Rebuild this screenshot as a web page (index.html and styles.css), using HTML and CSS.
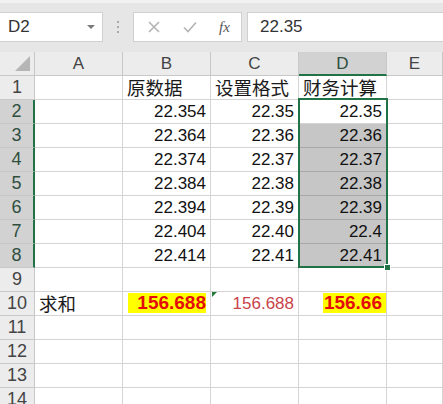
FILE: index.html
```html
<!DOCTYPE html>
<html>
<head>
<meta charset="utf-8">
<link rel="stylesheet" href="styles.css">
</head>
<body>
<div class="app">
  <div class="toolbar">
    <div class="namebox"><span class="ref">D2</span><span class="caret"></span></div>
    <div class="grip"><i></i><i></i><i></i></div>
    <div class="fxbox">
      <svg class="ico" width="16" height="16" viewBox="0 0 16 16"><path d="M3 3 L13 13 M13 3 L3 13" stroke="#b4b4b4" stroke-width="1.6" fill="none"/></svg>
      <svg class="ico" width="16" height="16" viewBox="0 0 16 16"><path d="M2 8.5 L6 12.5 L14 3.5" stroke="#b4b4b4" stroke-width="1.6" fill="none"/></svg>
      <span class="fx">fx</span>
    </div>
    <div class="formula">22.35</div>
  </div>
  <div class="sheet">
    <div class="h corner"><span class="tri"></span></div>
    <div class="h col">A</div>
    <div class="h col">B</div>
    <div class="h col">C</div>
    <div class="h col sel">D</div>
    <div class="h col">E</div>

    <div class="h row">1</div><div class="c"></div><div class="c t">原数据</div><div class="c t">设置格式</div><div class="c t">财务计算</div><div class="c"></div>
    <div class="h row sel">2</div><div class="c"></div><div class="c n">22.354</div><div class="c n">22.35</div><div class="c n act">22.35</div><div class="c"></div>
    <div class="h row sel">3</div><div class="c"></div><div class="c n">22.364</div><div class="c n">22.36</div><div class="c n shade">22.36</div><div class="c"></div>
    <div class="h row sel">4</div><div class="c"></div><div class="c n">22.374</div><div class="c n">22.37</div><div class="c n shade">22.37</div><div class="c"></div>
    <div class="h row sel">5</div><div class="c"></div><div class="c n">22.384</div><div class="c n">22.38</div><div class="c n shade">22.38</div><div class="c"></div>
    <div class="h row sel">6</div><div class="c"></div><div class="c n">22.394</div><div class="c n">22.39</div><div class="c n shade">22.39</div><div class="c"></div>
    <div class="h row sel">7</div><div class="c"></div><div class="c n">22.404</div><div class="c n">22.40</div><div class="c n shade">22.4</div><div class="c"></div>
    <div class="h row sel">8</div><div class="c"></div><div class="c n">22.414</div><div class="c n">22.41</div><div class="c n shade">22.41</div><div class="c"></div>
    <div class="h row">9</div><div class="c"></div><div class="c"></div><div class="c"></div><div class="c"></div><div class="c"></div>
    <div class="h row">10</div><div class="c t">求和</div><div class="c n"><span class="hl hl-b">156.688</span></div><div class="c n warn"><span class="flag"></span><span class="red">156.688</span></div><div class="c n flush"><span class="hl hl-d">156.66</span></div><div class="c"></div>
    <div class="h row">11</div><div class="c"></div><div class="c"></div><div class="c"></div><div class="c"></div><div class="c"></div>
    <div class="h row">12</div><div class="c"></div><div class="c"></div><div class="c"></div><div class="c"></div><div class="c"></div>
    <div class="h row">13</div><div class="c"></div><div class="c"></div><div class="c"></div><div class="c"></div><div class="c"></div>
    <div class="h row">14</div><div class="c"></div><div class="c"></div><div class="c"></div><div class="c"></div><div class="c"></div>

    <div class="selection"><span class="handle"></span></div>
  </div>
</div>
</body>
</html>
```

FILE: styles.css
```css
* { box-sizing: border-box; }
html, body { margin: 0; padding: 0; }
body {
  width: 443px;
  height: 404px;
  overflow: hidden;
  background: #ffffff;
  font-family: "Liberation Sans", "Noto Sans CJK SC", sans-serif;
}
.app { width: 443px; }

.toolbar {
  height: 52px;
  background: #e6e6e6;
  border-top: 3px solid #f2f2f2;
  display: flex;
  align-items: flex-start;
  padding-top: 9px;
}
.namebox {
  width: 103px;
  height: 30px;
  background: #fff;
  border: 1px solid #d0d0d0;
  border-left: none;
  display: flex;
  align-items: center;
  justify-content: space-between;
  padding: 0 7px 0 8px;
}
.ref { font-size: 17px; color: #333; }
.caret {
  width: 0; height: 0;
  border-left: 4px solid transparent;
  border-right: 4px solid transparent;
  border-top: 4px solid #7a7a7a;
}
.grip {
  width: 30px;
  height: 30px;
  display: flex;
  flex-direction: column;
  align-items: center;
  justify-content: center;
  gap: 3px;
}
.grip i { display: block; width: 2px; height: 2px; background: #a8a8a8; }
.fxbox {
  width: 109px;
  height: 30px;
  background: #fff;
  border: 1px solid #d0d0d0;
  display: flex;
  align-items: center;
  padding: 0 0 0 12px;
  gap: 20px;
}
.ico { display: block; }
.fx {
  font-family: "Liberation Serif", serif;
  font-style: italic;
  font-size: 15px;
  color: #555;
  margin-left: 1px;
}
.formula {
  flex: 1;
  margin-left: 5px;
  height: 30px;
  background: #fff;
  border: 1px solid #d0d0d0;
  border-right: none;
  font-size: 17px;
  color: #333;
  line-height: 28px;
  padding-left: 12px;
}

.sheet {
  position: relative;
  display: grid;
  grid-template-columns: 35px 88px 88px 88px 88px 56px;
  grid-auto-rows: 24px;
}
.h {
  background: #ececec;
  border-right: 1px solid #c8c8c8;
  border-bottom: 1px solid #c8c8c8;
  color: #444;
  font-size: 18px;
  line-height: 23px;
  text-align: center;
}
.col { font-size: 17px; }
.corner { position: relative; }
.tri {
  position: absolute;
  right: 4px;
  bottom: 4px;
  width: 0; height: 0;
  border-left: 15px solid transparent;
  border-bottom: 15px solid #b5b5b5;
}
.col.sel {
  background: #d2d2d2;
  border-bottom: 2px solid #217346;
  color: #2f4f3e;
}
.row.sel {
  background: #d2d2d2;
  border-right: 2px solid #217346;
  color: #2f4f3e;
}
.c {
  border-right: 1px solid #d4d4d4;
  border-bottom: 1px solid #d4d4d4;
  font-size: 17px;
  line-height: 23px;
  color: #111;
  white-space: nowrap;
  padding: 0 4px;
}
.t {
  font-size: 18.5px;
  font-family: "Noto Sans CJK SC", sans-serif;
  line-height: 23px;
  padding-left: 4px;
  color: #1a1a1a;
}
.n { text-align: right; }
.shade {
  background: #c6c6c6;
  border-bottom-color: #a9a9a9;
}
.act { background: #fff; }
.hl {
  background: #ffff00;
  color: #e40c0c;
  font-weight: bold;
  font-size: 19px;
  line-height: 20px;
  display: inline-block;
}
.hl-b { padding-left: 9px; }
.hl-d { padding: 0 4px 0 1px; }
.flush { padding-right: 0; }
.warn { position: relative; }
.flag {
  position: absolute;
  left: 1px;
  top: 0;
  width: 0; height: 0;
  border-top: 5px solid #1f7a3a;
  border-right: 5px solid transparent;
}
.red { color: #c94349; }

.selection {
  position: absolute;
  left: 298px;
  top: 46px;
  width: 90px;
  height: 170px;
  border: 2px solid #217346;
  pointer-events: none;
}
.handle {
  position: absolute;
  right: -5px;
  bottom: -5px;
  width: 7px;
  height: 7px;
  background: #217346;
  border: 1px solid #fff;
}
```
